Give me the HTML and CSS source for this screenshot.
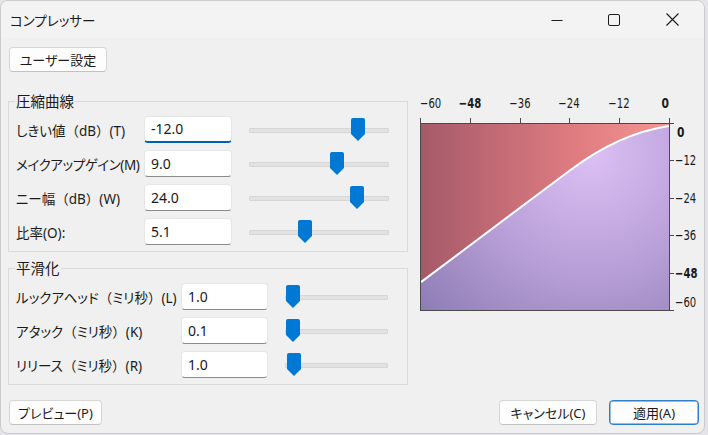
FILE: index.html
```html
<!DOCTYPE html>
<html lang="ja">
<head>
<meta charset="utf-8">
<title>コンプレッサー</title>
<link rel="stylesheet" href="styles.css">
</head>
<body>
<div class="window">
  <div class="titlebar">
    <div class="title">コンプレッサー</div>
    <div class="caption">
      <div class="cbtn min"><svg width="12" height="12" viewBox="0 0 12 12"><path d="M0.5 6.5h11" stroke="#1b1b1b" stroke-width="1"/></svg></div>
      <div class="cbtn max"><svg width="12" height="12" viewBox="0 0 12 12"><rect x="0.5" y="0.5" width="11" height="11" rx="1.5" fill="none" stroke="#1b1b1b" stroke-width="1"/></svg></div>
      <div class="cbtn close"><svg width="13" height="13" viewBox="0 0 13 13"><path d="M0.5 0.5L12.5 12.5M12.5 0.5L0.5 12.5" stroke="#1b1b1b" stroke-width="1.1"/></svg></div>
    </div>
  </div>
  <div class="content">
    <div class="toprow"><button class="btn preset">ユーザー設定</button></div>
    <div class="main">
      <div class="leftcol">
        <fieldset class="group g1">
          <legend>圧縮曲線</legend>
          <div class="row">
            <label>しきい値<span class="fw">（</span>dB<span class="fw">）</span>(T)</label>
            <div class="input focused">-12.0</div>
            <div class="slider"><div class="track"></div><div class="thumb" style="left:119px"></div></div>
          </div>
          <div class="row">
            <label class="tight">メイクアップゲイン(M)</label>
            <div class="input">9.0</div>
            <div class="slider"><div class="track"></div><div class="thumb" style="left:98px"></div></div>
          </div>
          <div class="row">
            <label>ニー幅<span class="fw">（</span>dB<span class="fw">）</span>(W)</label>
            <div class="input">24.0</div>
            <div class="slider"><div class="track"></div><div class="thumb" style="left:118px"></div></div>
          </div>
          <div class="row">
            <label>比率(O):</label>
            <div class="input">5.1</div>
            <div class="slider"><div class="track"></div><div class="thumb" style="left:66px"></div></div>
          </div>
        </fieldset>
        <fieldset class="group g2">
          <legend>平滑化</legend>
          <div class="row">
            <label>ルックアヘッド<span class="fw">（</span>ミリ秒<span class="fw">）</span>(L)</label>
            <div class="input">1.0</div>
            <div class="slider"><div class="track"></div><div class="thumb" style="left:18px"></div></div>
          </div>
          <div class="row">
            <label>アタック<span class="fw">（</span>ミリ秒<span class="fw">）</span>(K)</label>
            <div class="input">0.1</div>
            <div class="slider"><div class="track"></div><div class="thumb" style="left:18px"></div></div>
          </div>
          <div class="row">
            <label>リリース<span class="fw">（</span>ミリ秒<span class="fw">）</span>(R)</label>
            <div class="input">1.0</div>
            <div class="slider"><div class="track"></div><div class="thumb" style="left:19px"></div></div>
          </div>
        </fieldset>
      </div>
      <div class="graph">
        <span class="xl first" style="left:8px">−60</span>
        <span class="xl bold" style="left:58px">−48</span>
        <span class="xl" style="left:108px">−36</span>
        <span class="xl" style="left:157px">−24</span>
        <span class="xl" style="left:207px">−12</span>
        <span class="xl last bold" style="left:257px">0</span>
        <span class="tx" style="left:8px"></span>
        <span class="tx" style="left:58px"></span>
        <span class="tx" style="left:108px"></span>
        <span class="tx" style="left:157px"></span>
        <span class="tx" style="left:207px"></span>
        <span class="tx" style="left:257px"></span>
        <span class="ty" style="top:31px"></span>
        <span class="ty" style="top:68px"></span>
        <span class="ty" style="top:106px"></span>
        <span class="ty" style="top:143px"></span>
        <span class="ty" style="top:181px"></span>
        <span class="ty" style="top:218px"></span>
        <span class="yl topy bold" style="top:31px">0</span>
        <span class="yl" style="top:68px">−12</span>
        <span class="yl" style="top:106px">−24</span>
        <span class="yl" style="top:143px">−36</span>
        <span class="yl bold" style="top:181px">−48</span>
        <span class="yl boty" style="top:218px">−60</span>
        <div class="plot">
          <svg width="248" height="186" viewBox="0 0 249 187" preserveAspectRatio="none">
            <defs>
              <linearGradient id="red" x1="0" y1="0" x2="1" y2="0">
                <stop offset="0" stop-color="#a55a69"/>
                <stop offset="0.6" stop-color="#dd7b80"/>
                <stop offset="1" stop-color="#f59592"/>
              </linearGradient>
              <radialGradient id="purple" cx="170" cy="30" r="230" gradientUnits="userSpaceOnUse">
                <stop offset="0" stop-color="#dcc0f4"/>
                <stop offset="0.5" stop-color="#b9a0d8"/>
                <stop offset="1" stop-color="#8f7db5"/>
              </radialGradient>
            </defs>
            <rect x="0" y="0" width="249" height="187" fill="url(#red)"/>
            <path d="M0,158.95 L149.4,46.75 Q199.2,9.35 249,2.02 L249,187 L0,187 Z" fill="url(#purple)"/>
            <path d="M0,158.95 L149.4,46.75 Q199.2,9.35 249,2.02" fill="none" stroke="#ffffff" stroke-width="2"/>
          </svg>
        </div>
      </div>
    </div>
    <div class="footer">
      <button class="btn preview">プレビュー(P)</button>
      <div class="right">
        <button class="btn cancel">キャンセル(C)</button>
        <button class="btn apply">適用(A)</button>
      </div>
    </div>
  </div>
</div>
</body>
</html>
```
FILE: styles.css
```css
html, body {
  margin: 0;
  padding: 0;
  background: #e4e4ea;
}
body {
  width: 708px;
  height: 435px;
  overflow: hidden;
  font-family: "Noto Sans", "Noto Sans CJK JP", sans-serif;
  font-size: 14px;
  color: #1a1a1a;
}
.window {
  box-sizing: border-box;
  width: 705px;
  height: 434px;
  border: 1px solid #cbcbcb;
  border-radius: 8px;
  background: #f0f0f0;
  display: flex;
  flex-direction: column;
  overflow: hidden;
}
.titlebar {
  height: 37px;
  display: flex;
  align-items: center;
  background: #f3f3f3;
}
.title {
  padding-left: 9px;
  font-family: "Noto Sans CJK JP", sans-serif;
  font-feature-settings: "palt";
  font-size: 13.5px;
  flex: 1;
  margin-top: 1px;
}
.caption {
  display: flex;
  height: 37px;
}
.cbtn {
  display: flex;
  align-items: center;
  justify-content: center;
  height: 37px;
}
.cbtn svg { display: block; }
.min { width: 56px; }
.max { width: 58px; }
.close { width: 58px; padding-right: 3px; }

.content {
  padding: 0 0 0 7px;
  display: flex;
  flex-direction: column;
  flex: 1;
}
.toprow {
  margin-top: 9px;
  display: flex;
}
.btn {
  font-family: "Noto Sans", "Noto Sans CJK JP", sans-serif;
  font-feature-settings: "palt";
  font-size: 13px;
  color: #1a1a1a;
  background: #fdfdfd;
  border: 1px solid #d6d6d6;
  border-bottom-color: #c2c2c2;
  border-radius: 4px;
  height: 25px;
  padding: 0;
  line-height: 22px;
  box-sizing: border-box;
}
.preset { width: 98px; margin-left: 1px; }
.main {
  display: flex;
  margin-top: 20px;
}
.leftcol {
  width: 400px;
  display: flex;
  flex-direction: column;
}
.group {
  margin: 0;
  border: 1px solid #d9d9d9;
  padding: 6px 6px 6px 7px;
  box-sizing: border-box;
  width: 400px;
  display: flex;
  flex-direction: column;
  gap: 7px;
}
.g2 { margin-top: 7px; }
.group legend {
  font-family: "Noto Sans CJK JP", sans-serif;
  font-size: 14.5px;
  line-height: 18px;
  padding: 0 1px;
  margin-left: -1px;
}
.row {
  display: flex;
  align-items: center;
  height: 27px;
}
.row label {
  font-family: "Noto Sans", "Noto Sans CJK JP", sans-serif;
  font-feature-settings: "palt";
  font-size: 13.5px;
  white-space: nowrap;
  flex: none;
}
.row label.tight { letter-spacing: -0.4px; }
.row label .fw {
  font-feature-settings: normal;
}
.g1 .row label { width: 128px; }
.g2 .row label { width: 165px; }
.input {
  box-sizing: border-box;
  height: 27px;
  width: 88px;
  flex: none;
  background: #ffffff;
  border: 1px solid #e6e6e6;
  border-bottom: 1px solid #8b8b8b;
  border-radius: 4px;
  padding-left: 6px;
  font-size: 14px;
  line-height: 25px;
}
.g2 .input { width: 87px; }
.input.focused {
  border-bottom: 2px solid #005fb8;
  line-height: 24px;
}
.slider {
  position: relative;
  height: 27px;
  flex: none;
}
.g1 .slider { width: 160px; }
.g2 .slider { width: 124px; }
.track {
  position: absolute;
  top: 12px;
  height: 3px;
  background: #e2e2e2;
  border: 1px solid #d6d6d6;
  border-radius: 1px;
}
.g1 .track { left: 17px; width: 138px; }
.g2 .track { left: 17px; width: 101px; }
.thumb {
  position: absolute;
  top: 2px;
  width: 14px;
  height: 23px;
  background: #0078d4;
  border-radius: 2px 2px 0 0;
  clip-path: polygon(0 0, 100% 0, 100% 70%, 50% 100%, 0 70%);
}

.graph {
  position: relative;
  margin-left: 4px;
  width: 288px;
  height: 228px;
  font-family: "DejaVu Sans Condensed", "DejaVu Sans", sans-serif;
  font-size: 14px;
  color: #1a1a1a;
}
.plot {
  position: absolute;
  left: 8px;
  top: 31px;
  width: 248px;
  height: 186px;
  border: 1px solid #4a4a4a;
}
.plot svg { display: block; }
.xl {
  position: absolute;
  top: 4px;
  line-height: 15px;
  transform: translateX(-50%) scaleX(0.8);
  white-space: nowrap;
}
.xl.first { transform: scaleX(0.8); transform-origin: left center; }
.xl.last { transform: translateX(-100%) scaleX(0.85); transform-origin: right center; }
.bold { font-weight: bold; }
.tx {
  position: absolute;
  top: 26px;
  width: 1px;
  height: 5px;
  background: #4a4a4a;
}
.ty {
  position: absolute;
  left: 257px;
  width: 5px;
  height: 1px;
  background: #4a4a4a;
}
.yl {
  position: absolute;
  left: 263px;
  line-height: 15px;
  transform: translateY(-50%) scaleX(0.8);
  transform-origin: left center;
  white-space: nowrap;
}
.yl.topy { transform: translateY(2px) scaleX(0.85); left: 265px; }
.yl.boty { transform: translateY(-100%) scaleX(0.8); }

.footer {
  margin-top: 15px;
  display: flex;
  justify-content: space-between;
  padding-right: 5px;
}
.preview { width: 93px; margin-left: 1px; }
.right { display: flex; gap: 12px; }
.cancel { width: 98px; }
.apply {
  width: 90px;
  border: 1px solid #2f7fc8;
  box-shadow: inset 0 0 0 0.5px #2f7fc8;
}
```
